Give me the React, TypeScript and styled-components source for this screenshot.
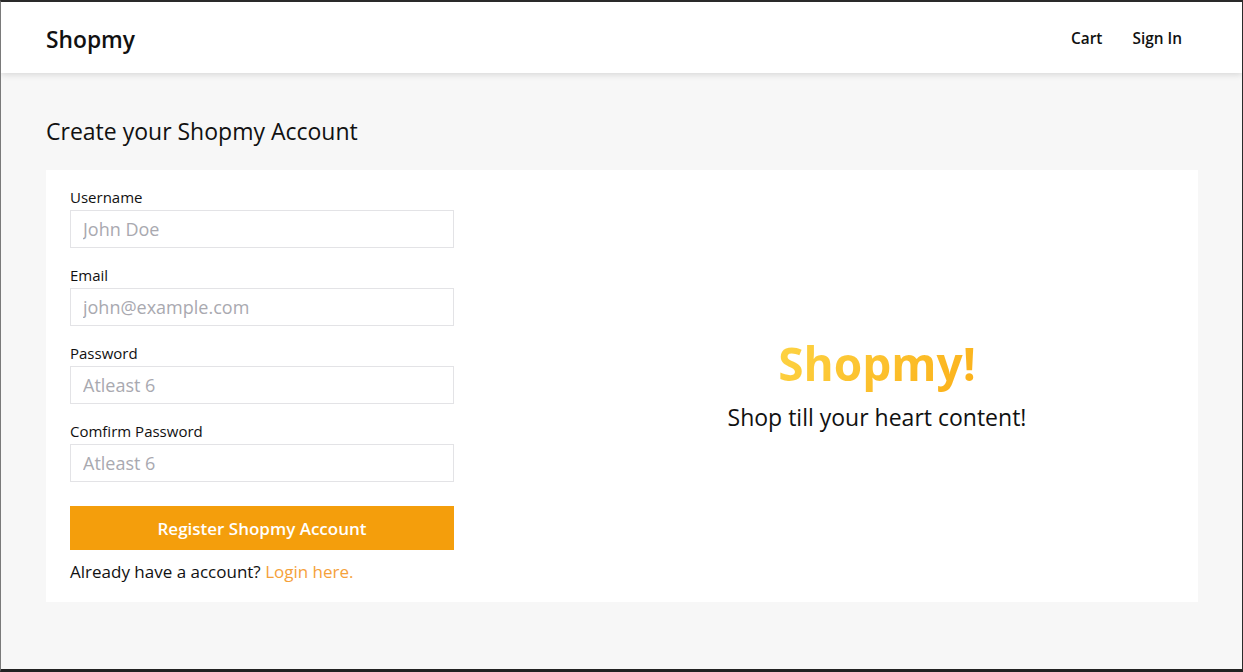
import React from "react";
import styled, { createGlobalStyle } from "styled-components";

const Global = createGlobalStyle`
  html, body { margin: 0; padding: 0; }
  body { font-family: "Open Sans", "Noto Sans", sans-serif; color: #111; background: #f7f7f7; }
  * { box-sizing: border-box; }
`;

const Frame = styled.div`
  height: 672px;
  border-top: 2px solid #2a2a2a;
  border-right: 1px solid #2a2a2a;
  border-bottom: 3px solid #222;
  border-left: 1px solid #7a7a7a;
  background: #f7f7f7;
  display: flex;
  flex-direction: column;
  overflow: hidden;
`;

const Header = styled.header`
  height: 71px;
  background: #fff;
  box-shadow: 0 2px 6px rgba(0, 0, 0, 0.12);
  display: flex;
  align-items: center;
  justify-content: space-between;
  padding: 3px 60px 0 45px;
  position: relative;
  z-index: 1;
`;

const Logo = styled.div`
  font-size: 22.8px;
  font-weight: 600;
  color: #111;
`;

const Nav = styled.nav`
  display: flex;
  gap: 30px;
  margin-top: -2px;
`;

const NavLink = styled.a`
  font-size: 15.4px;
  font-weight: 600;
  color: #111;
  text-decoration: none;
`;

const Main = styled.main`
  padding: 40px 44px 0 45px;
`;

const Title = styled.h1`
  margin: 0 0 21px;
  font-size: 23px;
  font-weight: 400;
  line-height: 36px;
`;

const Card = styled.section`
  background: #fff;
  display: grid;
  grid-template-columns: 384px 1fr;
  column-gap: 126px;
  padding: 16px 24px 19px;
`;

const Form = styled.form`
  display: flex;
  flex-direction: column;
`;

const Field = styled.div`
  display: flex;
  flex-direction: column;
  margin-bottom: 16px;
`;

const Label = styled.label`
  font-size: 15px;
  line-height: 22px;
  margin-bottom: 2px;
`;

const Input = styled.input`
  height: 38px;
  border: 1px solid #e3e3e6;
  padding: 0 12px;
  font-family: inherit;
  font-size: 18px;
  color: #333;
  outline: none;
  &::placeholder { color: #a9a9b0; }
`;

const Button = styled.button`
  margin-top: 8px;
  height: 44px;
  background: #f49e0c;
  color: #fff;
  border: none;
  font-family: inherit;
  font-size: 17px;
  font-weight: 600;
`;

const Footnote = styled.p`
  margin: 11px 0 0;
  font-size: 17px;
  line-height: 22px;
`;

const Link = styled.a`
  color: #f5a13a;
  text-decoration: none;
`;

const Promo = styled.div`
  display: flex;
  flex-direction: column;
  align-items: center;
  justify-content: center;
  text-align: center;
`;

const Brand = styled.h2`
  margin: -4px 0 8px;
  font-size: 46px;
  font-weight: 700;
  line-height: 60px;
  background: linear-gradient(135deg, #fdd545, #fbaf18);
  -webkit-background-clip: text;
  background-clip: text;
  color: transparent;
`;

const Tagline = styled.p`
  margin: 0;
  font-size: 23px;
  line-height: 32px;
`;

const fields = [
  { label: "Username", placeholder: "John Doe", type: "text" },
  { label: "Email", placeholder: "john@example.com", type: "email" },
  { label: "Password", placeholder: "Atleast 6", type: "password" },
  { label: "Comfirm Password", placeholder: "Atleast 6", type: "password" },
];

export default function App() {
  return (
    <Frame>
      <Global />
      <Header>
        <Logo>Shopmy</Logo>
        <Nav>
          <NavLink href="#">Cart</NavLink>
          <NavLink href="#">Sign In</NavLink>
        </Nav>
      </Header>
      <Main>
        <Title>Create your Shopmy Account</Title>
        <Card>
          <Form onSubmit={(e) => e.preventDefault()}>
            {fields.map((f) => (
              <Field key={f.label}>
                <Label>{f.label}</Label>
                <Input type={f.type} placeholder={f.placeholder} />
              </Field>
            ))}
            <Button type="submit">Register Shopmy Account</Button>
            <Footnote>
              Already have a account? <Link href="#">Login here.</Link>
            </Footnote>
          </Form>
          <Promo>
            <Brand>Shopmy!</Brand>
            <Tagline>Shop till your heart content!</Tagline>
          </Promo>
        </Card>
      </Main>
    </Frame>
  );
}
